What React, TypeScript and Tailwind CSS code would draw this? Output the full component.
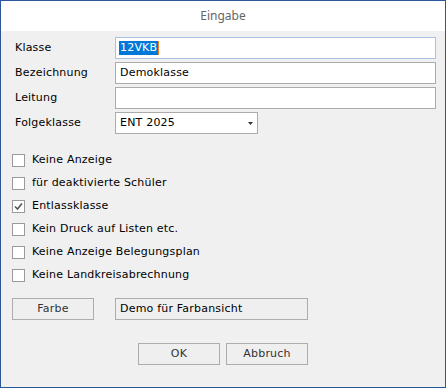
const font = { fontFamily: '"DejaVu Sans", Verdana, sans-serif', letterSpacing: "0.2px" };

function Field({ label, children }: { label: string; children: React.ReactNode }) {
  return (
    <div className="flex h-[22px] items-center">
      <div className="w-[101px] pl-[1px] text-[11px] text-black">{label}</div>
      {children}
    </div>
  );
}

function Check({ label, checked = false }: { label: string; checked?: boolean }) {
  return (
    <div className="flex h-[23px] items-center">
      <div className="flex h-[13px] w-[13px] items-center justify-center border border-[#9a9a9a] bg-white">
        {checked && (
          <svg width="9" height="9" viewBox="0 0 9 9">
            <path d="M1 4.5 L3.5 7 L8 1.5" fill="none" stroke="#555" strokeWidth="1.6" />
          </svg>
        )}
      </div>
      <span className="ml-[7px] text-[11px] text-black">{label}</span>
    </div>
  );
}

export default function App() {
  return (
    <div
      className="flex h-[388px] w-[446px] flex-col border border-[#2b579a] bg-[#f0f0f0]"
      style={font}
    >
      <div
        className="flex h-[30px] items-center justify-center bg-white text-[12px] tracking-normal text-[#666]"
        style={{ fontFamily: '"Noto Sans", "Open Sans", sans-serif' }}
      >
        Eingabe
      </div>

      <div className="flex flex-col pl-[11px] pr-[9px] pt-[6px]">
        <div className="flex flex-col gap-[3px] pl-[2px]">
          <Field label="Klasse">
            <div className="flex h-[22px] flex-1 items-center border border-[#a9c1e3] bg-white pl-[3px] text-[11px]">
              <span className="border-r border-[#f08020] bg-[#0078d7] px-[1px] leading-[14px] text-white">
                12VKB
              </span>
            </div>
          </Field>
          <Field label="Bezeichnung">
            <div className="flex h-[22px] flex-1 items-center border border-[#ababab] bg-white pl-[4px] text-[11px]">
              Demoklasse
            </div>
          </Field>
          <Field label="Leitung">
            <div className="h-[22px] flex-1 border border-[#ababab] bg-white" />
          </Field>
          <Field label="Folgeklasse">
            <div className="flex h-[22px] w-[143px] items-center justify-between border border-[#ababab] bg-white pl-[4px] pr-[4px] text-[11px]">
              <span>ENT 2025</span>
              <svg width="5" height="3" viewBox="0 0 5 3">
                <path d="M0 0 H5 L2.5 3 Z" fill="#333" />
              </svg>
            </div>
          </Field>
        </div>

        <div className="mt-[15px] flex flex-col">
          <Check label="Keine Anzeige" />
          <Check label="für deaktivierte Schüler" />
          <Check label="Entlassklasse" checked />
          <Check label="Kein Druck auf Listen etc." />
          <Check label="Keine Anzeige Belegungsplan" />
          <Check label="Keine Landkreisabrechnung" />
        </div>

        <div className="mt-[11px] flex h-[22px] items-center">
          <div className="flex h-[22px] w-[82px] items-center justify-center border border-[#adadad] bg-[#efefef] text-[11px] text-[#333]">
            Farbe
          </div>
          <div className="ml-[21px] flex h-[22px] w-[193px] items-center border border-[#adadad] bg-[#efefef] pl-[4px] text-[11px] text-black">
            Demo für Farbansicht
          </div>
        </div>

        <div className="mt-[23px] flex gap-[6px] pl-[126px]">
          <div className="flex h-[22px] w-[82px] items-center justify-center border border-[#adadad] bg-[#efefef] text-[11px] text-[#333]">
            OK
          </div>
          <div className="flex h-[22px] w-[82px] items-center justify-center border border-[#adadad] bg-[#efefef] text-[11px] text-[#333]">
            Abbruch
          </div>
        </div>
      </div>
    </div>
  );
}
